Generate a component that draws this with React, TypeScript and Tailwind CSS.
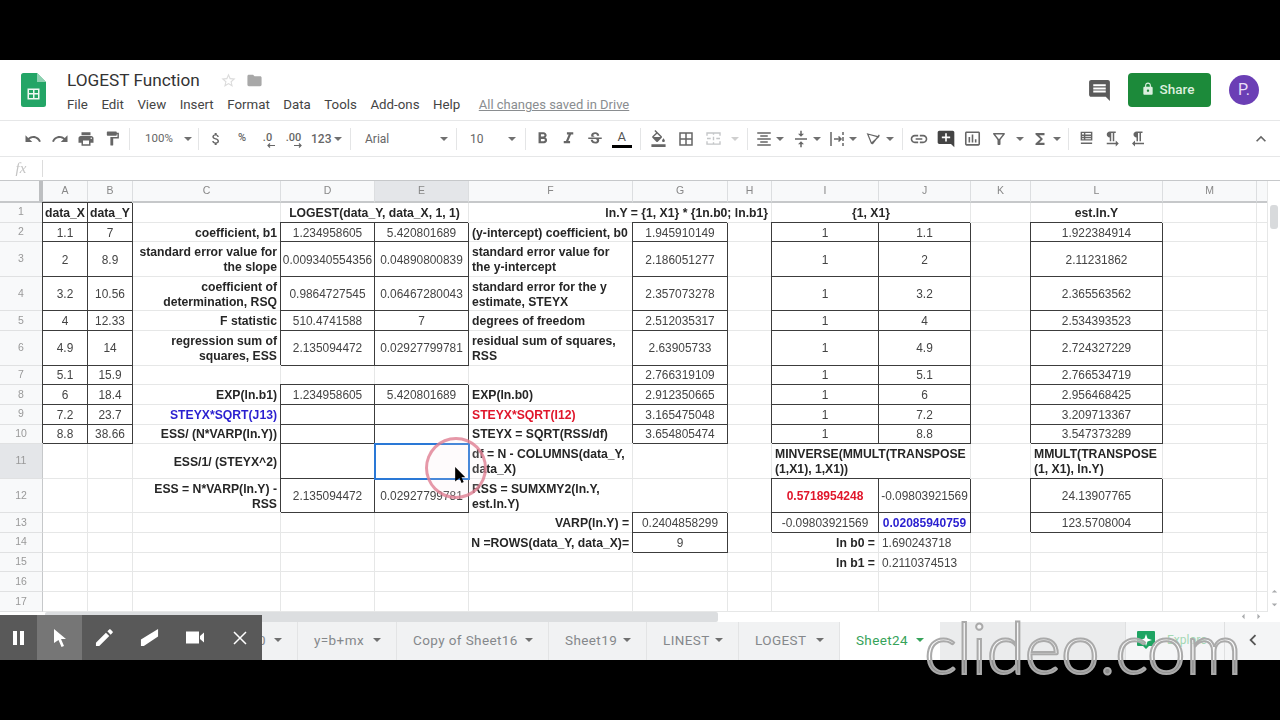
import type { ReactNode } from 'react'
import {
	MdAddComment,
	MdAttachMoney,
	MdBorderAll,
	MdComment,
	MdExpandLess,
	MdFolder,
	MdFormatAlignCenter,
	MdFormatBold,
	MdFormatColorFill,
	MdFormatItalic,
	MdFormatPaint,
	MdFormatTextdirectionLToR,
	MdFormatTextdirectionRToL,
	MdFunctions,
	MdInsertChartOutlined,
	MdLink,
	MdLock,
	MdOutlineFilterAlt,
	MdPrint,
	MdRedo,
	MdStarBorder,
	MdStrikethroughS,
	MdUndo,
	MdVerticalAlignCenter,
	MdChevronLeft,
	MdArrowLeft,
	MdArrowRight,
	MdArrowDropUp,
	MdArrowDropDown,
} from 'react-icons/md'

interface Cell {
	t?: string
	kind?: 'num' | 'right' | 'left' | 'center' | 'plain'
	box?: boolean
	color?: string
	bold?: boolean
	span?: string
	selected?: boolean
}

const n = (t?: string): Cell => ({ t, kind: 'num', box: true })
const r = (t: string, color = ''): Cell => ({ t, kind: 'right', color })
const l = (t: string, color = ''): Cell => ({ t, kind: 'left', color })
const e: Cell = {}

const columns = ['A', 'B', 'C', 'D', 'E', 'F', 'G', 'H', 'I', 'J', 'K', 'L', 'M']

const rows: Cell[][] = [
	[
		{ t: 'data_X', kind: 'center', box: true },
		{ t: 'data_Y', kind: 'center', box: true },
		e,
		{ t: 'LOGEST(data_Y, data_X, 1, 1)', kind: 'center', span: 'col-span-2' },
		{ t: 'ln.Y = {1, X1} * {1n.b0; ln.b1}', kind: 'right', span: 'col-span-3' },
		{ t: '{1, X1}', kind: 'center', span: 'col-span-2' },
		e,
		{ t: 'est.ln.Y', kind: 'center' },
		e,
	],
	[n('1.1'), n('7'), r('coefficient, b1'), n('1.234958605'), n('5.420801689'), l('(y-intercept) coefficient, b0'), n('1.945910149'), e, n('1'), n('1.1'), e, n('1.922384914'), e],
	[n('2'), n('8.9'), r('standard error value for the slope'), n('0.009340554356'), n('0.04890800839'), l('standard error value for the y-intercept'), n('2.186051277'), e, n('1'), n('2'), e, n('2.11231862'), e],
	[n('3.2'), n('10.56'), r('coefficient of determination, RSQ'), n('0.9864727545'), n('0.06467280043'), l('standard error for the y estimate, STEYX'), n('2.357073278'), e, n('1'), n('3.2'), e, n('2.365563562'), e],
	[n('4'), n('12.33'), r('F statistic'), n('510.4741588'), n('7'), l('degrees of freedom'), n('2.512035317'), e, n('1'), n('4'), e, n('2.534393523'), e],
	[n('4.9'), n('14'), r('regression sum of squares, ESS'), n('2.135094472'), n('0.02927799781'), l('residual sum of squares, RSS'), n('2.63905733'), e, n('1'), n('4.9'), e, n('2.724327229'), e],
	[n('5.1'), n('15.9'), e, e, e, e, n('2.766319109'), e, n('1'), n('5.1'), e, n('2.766534719'), e],
	[n('6'), n('18.4'), r('EXP(ln.b1)'), n('1.234958605'), n('5.420801689'), l('EXP(ln.b0)'), n('2.912350665'), e, n('1'), n('6'), e, n('2.956468425'), e],
	[n('7.2'), n('23.7'), r('STEYX*SQRT(J13)', 'text-[#2a1fd0]'), n(), n(), l('STEYX*SQRT(I12)', 'text-[#e0162b]'), n('3.165475048'), e, n('1'), n('7.2'), e, n('3.209713367'), e],
	[n('8.8'), n('38.66'), r('ESS/ (N*VARP(ln.Y))'), n(), n(), l('STEYX = SQRT(RSS/df)'), n('3.654805474'), e, n('1'), n('8.8'), e, n('3.547373289'), e],
	[e, e, r('ESS/1/ (STEYX^2)'), n(), { selected: true }, l('df = N - COLUMNS(data_Y, data_X)'), e, e, { t: 'MINVERSE(MMULT(TRANSPOSE (1,X1), 1,X1))', kind: 'left', span: 'col-span-2' }, e, l('MMULT(TRANSPOSE (1, X1), ln.Y)'), e],
	[e, e, r('ESS = N*VARP(ln.Y) - RSS'), n('2.135094472'), n('0.02927799781'), l('RSS = SUMXMY2(ln.Y, est.ln.Y)'), e, e, { t: '0.5718954248', kind: 'num', box: true, bold: true, color: 'text-[#e0162b]' }, n('-0.09803921569'), e, n('24.13907765'), e],
	[e, e, e, e, e, r('VARP(ln.Y) ='), n('0.2404858299'), e, n('-0.09803921569'), { t: '0.02085940759', kind: 'num', box: true, bold: true, color: 'text-[#2a1fd0]' }, e, n('123.5708004'), e],
	[e, e, e, e, e, r('N =ROWS(data_Y, data_X)=', 'whitespace-nowrap text-[#262626]'), n('9'), e, r('ln b0 ='), { t: '1.690243718', kind: 'plain' }, e, e, e],
	[e, e, e, e, e, e, e, e, r('ln b1 ='), { t: '0.2110374513', kind: 'plain' }, e, e, e],
	[e, e, e, e, e, e, e, e, e, e, e, e, e],
	[e, e, e, e, e, e, e, e, e, e, e, e, e],
]

const tabs = [
	{ name: 'y=b+mx', width: 'w-[99px]' },
	{ name: 'Copy of Sheet16', width: 'w-[152px]' },
	{ name: 'Sheet19', width: 'w-[98px]' },
	{ name: 'LINEST', width: 'w-[92px]' },
	{ name: 'LOGEST', width: 'w-[101px]' },
]

const Caret = ({ className = '' }: { className?: string }) => (
	<svg viewBox="0 0 8 4" className={`h-[4px] w-[8px] shrink-0 fill-[#707070] ${className}`}>
		<path d="M0 0h8L4 4z" />
	</svg>
)

const Sep = ({ className = '' }: { className?: string }) => (
	<div className={`h-[22px] w-px shrink-0 bg-[#e4e5e6] ${className}`} />
)

const Btn = ({ className = 'w-[26.5px]', children }: { className?: string; children: ReactNode }) => (
	<div className={`flex shrink-0 items-center justify-center text-[#666] ${className}`}>{children}</div>
)

const cellClass = (c: Cell) => {
	const base = 'flex min-w-0 items-center border-b border-r px-[3px] pt-[2px] leading-[15px]'
	const border = c.box
		? 'border-[#3c3c3c] shadow-[-1px_-1px_0_0_#3c3c3c]'
		: 'border-[#e6e7e7]'
	if (c.selected) return `${base} relative z-10 border-[#e6e7e7] outline-2 -outline-offset-1 outline-[#2a78d6]`
	switch (c.kind) {
		case 'num':
			return `${base} ${border} justify-center whitespace-nowrap ${c.bold ? 'text-[12px] font-bold' : 'text-[11.9px] text-[#444]'} ${c.color ?? ''}`
		case 'plain':
			return `${base} ${border} whitespace-nowrap text-[11.9px] text-[#444]`
		case 'center':
			return `${base} ${border} justify-center whitespace-nowrap text-[12.2px] font-bold text-[#262626]`
		case 'right':
			return `${base} ${border} justify-end text-right text-[12.2px] font-bold ${c.color || 'text-[#262626]'}`
		case 'left':
			return `${base} ${border} text-[12.2px] font-bold ${c.color || 'text-[#262626]'}`
		default:
			return `${base} ${border}`
	}
}

const SheetsLogo = () => (
	<svg viewBox="0 0 25 34" className="h-[34px] w-[25px] shrink-0">
		<path d="M2.5 0H16l9 9v22.5a2.5 2.5 0 0 1-2.5 2.5h-20A2.5 2.5 0 0 1 0 31.500v-29A2.500 2.500 0 0 1 2.500 0z" fill="#23a566" />
		<path d="M16 0l9 9h-9z" fill="#8ed1b1" />
		<path d="M6.500 15.500h12v11h-12zM8 17v3h4v-3zm5.500 0v3H17v-3zM8 21.500V25h4v-3.500zm5.500 0V25H17v-3.500z" fill="#f1f8f4" fillRule="evenodd" />
	</svg>
)

export default function App() {
	return (
		<div className="relative h-[720px] w-[1280px] overflow-hidden bg-black pt-[60px] font-[Roboto,sans-serif]">
			<div className="flex h-[600px] flex-col bg-white blur-[0.3px]">
				{/* title bar */}
				<div className="flex h-[60px] shrink-0 items-start pl-[21px] pr-[21px]">
					<div className="mt-[13px]">
						<SheetsLogo />
					</div>
					<div className="ml-[21px] mt-[9px]">
						<div className="flex items-center text-[#5f6368]">
							<span className="text-[17.200px] leading-[22px] text-[#333]">LOGEST Function</span>
							<MdStarBorder className="ml-[20px] text-[17px] text-[#dcdcdc]" />
							<MdFolder className="ml-[9px] text-[17px] text-[#a8a8a8]" />
						</div>
						<div className="mt-[5px] flex items-center gap-[13.500px] text-[13.300px] leading-[18px] text-[#444]">
							<span>File</span>
							<span>Edit</span>
							<span>View</span>
							<span>Insert</span>
							<span>Format</span>
							<span>Data</span>
							<span>Tools</span>
							<span>Add-ons</span>
							<span>Help</span>
							<span className="ml-[5px] text-[13px] text-[#8a8d90] underline">All changes saved in Drive</span>
						</div>
					</div>
					<div className="ml-auto mt-[13px] flex items-center">
						<MdComment className="text-[25px] text-[#5a5a5a]" />
						<div className="ml-[16px] flex h-[34px] w-[83px] items-center justify-center gap-[5px] rounded-[4px] bg-[#1c8a3a] pb-[2px] pr-[4px] text-[13.500px] font-medium text-[#dcefdf]">
							<MdLock className="text-[14px]" />
							Share
						</div>
						<div className="ml-[18px] flex h-[30px] w-[30px] items-center justify-center rounded-full bg-[#6b3fb5] text-[16px] text-[#e9def7]">
							P.
						</div>
					</div>
				</div>

				{/* toolbar */}
				<div className="flex h-[37px] shrink-0 items-center border-y border-[#e6e7e8] pl-[20px] text-[12px] text-[#666]">
					<Btn><MdUndo size={18} /></Btn>
					<Btn><MdRedo size={18} /></Btn>
					<Btn><MdPrint size={18} /></Btn>
					<Btn><MdFormatPaint size={17} /></Btn>
					<Sep className="ml-[3px]" />
					<div className="ml-[15px] w-[39px] shrink-0 text-[11.500px]">100%</div>
					<Caret />
					<Sep className="ml-[6px]" />
					<Btn className="ml-[4px] w-[26px]"><MdAttachMoney size={16} /></Btn>
					<Btn className="w-[26px] text-[11px] font-medium">%</Btn>
					<Btn className="w-[25px]">
						<div className="flex flex-col items-center pt-[3px]">
							<span className="text-[11px] font-medium leading-[10px]">.0</span>
							<svg viewBox="0 0 8 5" className="ml-[7px] h-[5px] w-[8px] fill-none stroke-[#666] stroke-[1.200]">
								<path d="M8 2.500H1M3 .5 1 2.500l2 2" />
							</svg>
						</div>
					</Btn>
					<Btn className="w-[27px]">
						<div className="flex flex-col items-center pt-[3px]">
							<span className="text-[11px] font-medium leading-[10px]">.00</span>
							<svg viewBox="0 0 8 5" className="ml-[9px] h-[5px] w-[8px] fill-none stroke-[#666] stroke-[1.200]">
								<path d="M0 2.500h7M5 .5l2 2-2 2" />
							</svg>
						</div>
					</Btn>
					<div className="ml-[4px] w-[23px] shrink-0 font-medium">123</div>
					<Caret />
					<Sep className="ml-[8px]" />
					<div className="ml-[14px] w-[75px] shrink-0">Arial</div>
					<Caret />
					<Sep className="ml-[8px]" />
					<div className="ml-[13px] w-[38px] shrink-0">10</div>
					<Caret />
					<Sep className="ml-[9px]" />
					<Btn className="ml-[3px] w-[26.5px]"><MdFormatBold size={19} /></Btn>
					<Btn><MdFormatItalic size={19} /></Btn>
					<Btn><MdStrikethroughS size={18} /></Btn>
					<Btn>
						<div className="flex flex-col items-center">
							<span className="text-[13px] leading-[14px] text-[#555]">A</span>
							<div className="mt-[1px] h-[3px] w-[20px] bg-black" />
						</div>
					</Btn>
					<Sep className="ml-[4.500px]" />
					<Btn className="ml-[4.500px] w-[26px]"><MdFormatColorFill size={17} /></Btn>
					<Btn className="ml-[2px] w-[26.5px]"><MdBorderAll size={18} /></Btn>
					<Btn className="ml-[0.500px] w-[26px]">
						<svg viewBox="0 0 16 14" className="h-[13px] w-[15px] fill-none stroke-[#c4c6c8] stroke-[1.500]">
							<path d="M1 4V1h14v3M1 10v3h14v-3M1 7h4M11 7h4M8 1v2M8 5v4M8 11v2" />
						</svg>
					</Btn>
					<Caret className="ml-[5px] !fill-[#cfcfcf]" />
					<Sep className="ml-[8px]" />
					<Btn className="ml-[3px] w-[26px]"><MdFormatAlignCenter size={18} /></Btn>
					<Caret className="-ml-[1px]" />
					<Btn className="ml-[4px] w-[26px]"><MdVerticalAlignCenter size={18} /></Btn>
					<Caret className="-ml-[1px]" />
					<Btn className="ml-[3px] w-[26px]">
						<svg viewBox="0 0 16 16" className="h-[16px] w-[16px] fill-none stroke-[#666] stroke-[1.500]">
							<path d="M2 1v14M14 1v3M14 6v4M14 12v3M5 8h7M9.500 5.500 12 8l-2.500 2.500" />
						</svg>
					</Btn>
					<Caret className="-ml-[1px]" />
					<Btn className="ml-[3px] w-[26px]">
						<svg viewBox="0 0 18 16" className="h-[14px] w-[15px] fill-none stroke-[#666] stroke-[1.500]">
							<path d="M2 2l13 3.500L6.500 13zM7.500 14 16 3" />
						</svg>
					</Btn>
					<Caret />
					<Sep className="ml-[8px]" />
					<Btn className="ml-[3px] w-[26px]"><MdLink size={20} /></Btn>
					<Btn className="ml-[1px] w-[26px]"><MdAddComment size={20} className="text-[#444]" /></Btn>
					<Btn className="w-[26px]"><MdInsertChartOutlined size={19} /></Btn>
					<Btn className="ml-[1px] w-[26px]"><MdOutlineFilterAlt size={18} /></Btn>
					<Caret className="ml-[4px]" />
					<Btn className="ml-[3px] w-[26px]"><MdFunctions size={18} /></Btn>
					<Caret />
					<Sep className="ml-[7px]" />
					<Btn className="ml-[4px] w-[26px]">
						<svg viewBox="0 0 16 16" className="h-[15px] w-[15px] fill-none stroke-[#666] stroke-[1.500]">
							<path d="M2.500 1.500h11v8h-11zM2.500 4.500h11M2.500 7h11M6 1.500v8M2 13h12" />
						</svg>
					</Btn>
					<Btn className="w-[26px]"><MdFormatTextdirectionLToR size={18} /></Btn>
					<Btn className="w-[26px]"><MdFormatTextdirectionRToL size={18} /></Btn>
					<MdExpandLess className="ml-auto mr-[9px] text-[20px] text-[#666]" />
				</div>

				{/* formula bar */}
				<div className="flex h-[23px] shrink-0 items-center">
					<div className="flex h-[17px] w-[43px] items-center justify-center border-r border-[#dcdcdc] font-['Liberation_Serif',serif] text-[15px] italic text-[#c4c4c4]">
						fx
					</div>
				</div>

				{/* sheet grid */}
				<div className="flex h-[431.600px] shrink-0 border-t border-[#c6c8ca] font-['Liberation_Sans',Arial,sans-serif]">
					<div className="grid h-full w-[1267px] grid-cols-[43px_45px_45px_148px_94px_94px_164px_95px_44px_107px_92px_60px_132px_94px_10px] grid-rows-[22px_19.700px_19.700px_34.500px_34.500px_19.700px_34.500px_19.700px_19.700px_19.700px_19.700px_34.500px_34.500px_19.700px_19.700px_19.700px_19.700px_19.700px]">
						<div className="border-b-2 border-r-[4px] border-b-[#c6c8ca] border-r-[#bdbfc1] bg-[#f8f9fa]" />
						{columns.map((col) => (
							<div
								key={col}
								className={`flex items-center justify-center border-b-2 border-r border-b-[#c6c8ca] border-r-[#dcdee0] text-[10.500px] text-[#888] ${col === 'E' ? 'bg-[#e4e6e9]' : 'bg-[#f8f9fa]'}`}
							>
								{col}
							</div>
						))}
						<div className="border-b-2 border-b-[#c6c8ca] bg-[#f8f9fa]" />
						{rows.map((row, i) => [
							<div
								key={`h${i}`}
								className={`flex items-center justify-center border-b border-r border-b-[#e0e1e2] border-r-[#c6c8ca] text-[10.500px] text-[#999] ${i === 10 ? 'bg-[#e4e6e9]' : 'bg-[#f8f9fa]'}`}
							>
								{i + 1}
							</div>,
							...row.map((c, j) => (
								<div key={`${i}-${j}`} className={`${cellClass(c)} ${c.span ?? ''}`}>
									{c.t && <span>{c.t}</span>}
								</div>
							)),
							<div key={`f${i}`} className="border-b border-[#e6e7e7]" />,
						])}
					</div>
					<div className="flex w-[13px] flex-col items-center justify-between border-l border-[#e6e7e7] pb-[1px] pt-[24px]">
						<div className="h-[24px] w-[8px] rounded-[3px] bg-[#d8dadc]" />
						<div className="flex flex-col text-[#a9abad]">
							<MdArrowDropUp size={13} />
							<MdArrowDropDown size={13} />
						</div>
					</div>
				</div>

				{/* horizontal scrollbar */}
				<div className="flex h-[10.400px] shrink-0 items-center">
					<div className="ml-[45px] h-full w-[673px] rounded-[2px] bg-[#dcdee0]" />
					<div className="ml-auto mr-[15px] flex gap-[2px] text-[#a9abad]">
						<MdArrowLeft size={13} />
						<MdArrowRight size={13} />
					</div>
				</div>

				{/* sheet tabs */}
				<div className="flex min-h-0 flex-1 items-stretch bg-[#f1f2f3] text-[13.500px] tracking-[0.4px] text-[#85888b]">
					<div className="flex w-[298px] shrink-0 items-center justify-end gap-[8px] border-r border-[#e3e4e5] pb-[2px] pr-[15px]">
						<span>0</span>
						<Caret />
					</div>
					{tabs.map((tab) => (
						<div key={tab.name} className={`flex shrink-0 items-center justify-between border-r border-[#e3e4e5] pb-[2px] pl-[16px] pr-[15px] ${tab.width}`}>
							<span>{tab.name}</span>
							<Caret />
						</div>
					))}
					<div className="flex w-[100px] shrink-0 items-center justify-center gap-[8px] bg-white pb-[2px] text-[#36a35a]">
						<span>Sheet24</span>
						<Caret className="!fill-[#36a35a]" />
					</div>
					<div className="w-[185px] shrink-0 bg-[#ebeced]" />
					<div className="flex w-[100px] shrink-0 items-center gap-[12px] border-x border-[#dfe0e1] bg-[#f5f6f7] pb-[2px] pl-[11px] text-[12px] tracking-normal text-[#a4d8b4]">
						<svg viewBox="0 0 18 18" className="h-[18px] w-[18px] shrink-0">
							<path d="M1 0h16a1 1 0 0 1 1 1v13a1 1 0 0 1-1 1h-5l-3 3-3-3H1a1 1 0 0 1-1-1V1a1 1 0 0 1 1-1z" fill="#1fa463" />
							<path d="M9 3l1.500 4.500L15 9l-4.500 1.500L9 15l-1.500-4.500L3 9l4.500-1.500z" fill="#fff" />
						</svg>
						<span>Explore</span>
					</div>
					<div className="flex w-[55px] shrink-0 items-center justify-center bg-[#f4f5f6] pb-[2px]">
						<MdChevronLeft size={22} className="text-[#555]" />
					</div>
				</div>
			</div>

			{/* screen recorder toolbar */}
			<div className="absolute bottom-[60px] left-0 z-20 flex h-[45px] w-[262px] items-center bg-[#595959] text-white">
				<div className="flex h-full w-[37px] items-center justify-center">
					<svg viewBox="0 0 14 14" className="h-[14px] w-[14px] fill-white">
						<path d="M1 0h4v14H1zM8 0h4v14H8z" />
					</svg>
				</div>
				<div className="flex h-full w-[45px] items-center justify-center bg-[#767676]">
					<svg viewBox="0 0 14 18" className="h-[18px] w-[14px] fill-white">
						<path d="M1 0l12 10H8l3 7-2.500 1-3-7L1 14z" />
					</svg>
				</div>
				<div className="flex h-full w-[45px] items-center justify-center">
					<svg viewBox="0 0 20 20" className="h-[19px] w-[19px] fill-white">
						<path d="M1 15.500V19h3.500L15 8.500 11.500 5zM16.500 7 18.500 5a1 1 0 0 0 0-1.400L16.400 1.500a1 1 0 0 0-1.400 0L13 3.500z" />
					</svg>
				</div>
				<div className="flex h-full w-[45px] items-center justify-center">
					<svg viewBox="0 0 20 20" className="h-[19px] w-[19px] fill-white">
						<path d="M1 12 19 1v8L4 19H1z" />
					</svg>
				</div>
				<div className="flex h-full w-[45px] items-center justify-center">
					<svg viewBox="0 0 20 14" className="h-[15px] w-[20px] fill-white">
						<path d="M1 1h13v12H1zM15 5.500 19 2v10l-4-3.500z" />
					</svg>
				</div>
				<div className="flex h-full w-[45px] items-center justify-center">
					<svg viewBox="0 0 14 14" className="h-[14px] w-[14px] fill-none stroke-white stroke-[1.500]">
						<path d="M1 1l12 12M13 1 1 13" />
					</svg>
				</div>
			</div>

			{/* pointer highlight over the selected cell */}
			<div className="absolute left-[425px] top-[437px] z-20 h-[62px] w-[62px] rounded-full border-[3px] border-[#e07f92]/80 bg-[#fbe4e8]/15" />
			<svg viewBox="0 0 10 15" className="absolute left-[455px] top-[467px] z-20 h-[16px] w-[11px] fill-black">
				<path d="M0 0l9.500 9.500H6l2 4.500-2 1-2-4.700L0 13.500z" />
			</svg>

			{/* video watermark */}
			<div className="absolute left-[924px] top-[603px] z-30 font-[Lato,sans-serif] text-[70px] font-light leading-[88px] tracking-[-0.5px] text-white/55 [-webkit-text-stroke:2px_#aaaaaa]">
				clideo.com
			</div>
		</div>
	)
}
